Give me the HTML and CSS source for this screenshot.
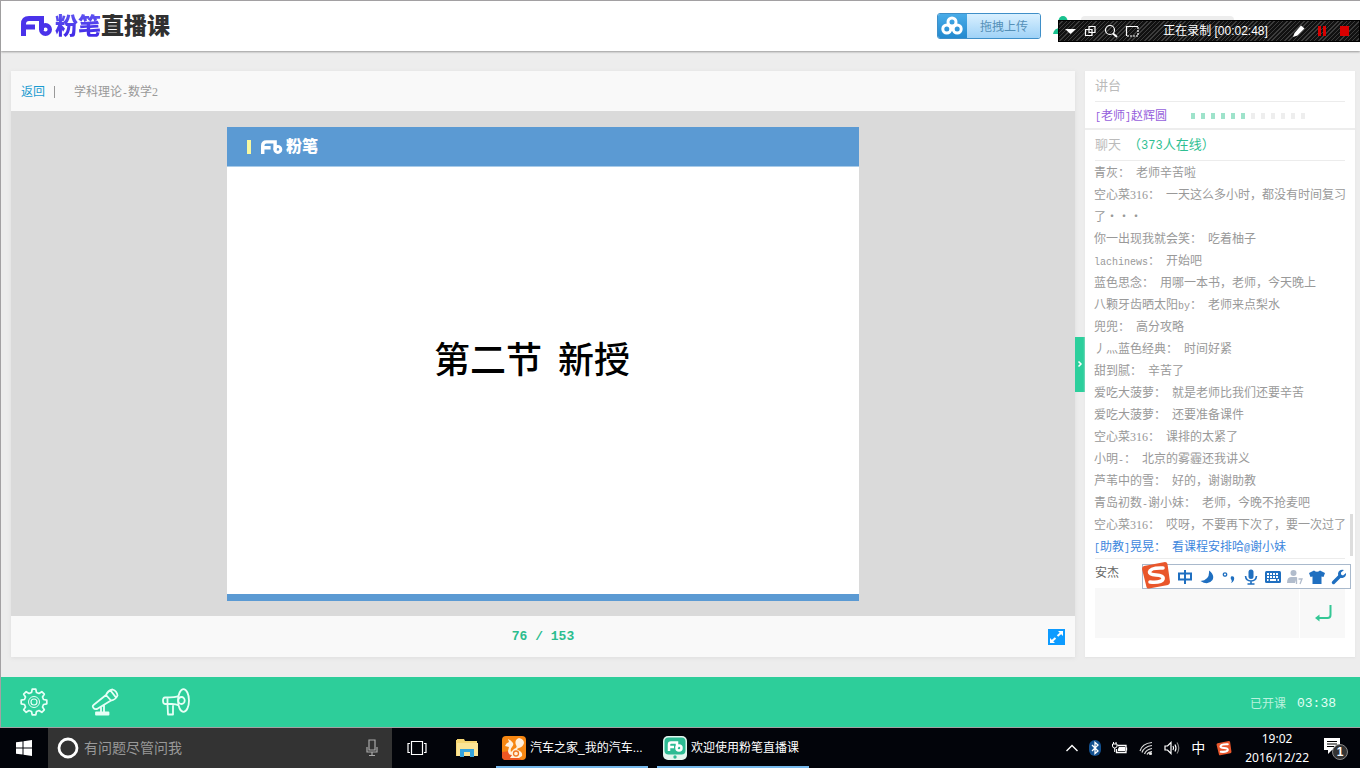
FILE: index.html
```html
<!DOCTYPE html>
<html lang="zh-CN">
<head>
<meta charset="utf-8">
<title>粉笔直播课</title>
<link rel="stylesheet" href="styles.css">
</head>
<body>
<div class="app">
  <header class="header">
    <h1 class="brand">
      <svg class="brand-mark" width="32" height="20" viewBox="0 0 32 20" fill="none" stroke="#4a32ea" stroke-width="5" aria-hidden="true"><path d="M2.500 20V8Q2.500 2.500 8 2.500H20.500V14M3 11H14"/><circle cx="24.500" cy="13.500" r="4.300" stroke-width="4.400"/></svg>
      <span class="brand-name">粉笔</span><span class="brand-product">直播课</span>
    </h1>
    <div class="header-side">
      <button class="upload" type="button">
        <span class="upload-icon"><svg width="22" height="20" viewBox="0 0 22 20" fill="none" stroke="#fff" stroke-width="3" aria-hidden="true"><circle cx="11" cy="6" r="4"/><circle cx="5.800" cy="13" r="4"/><circle cx="16.200" cy="13" r="4"/></svg></span>
        <span class="upload-label">拖拽上传</span>
      </button>
      <svg class="avatar" width="20" height="20" viewBox="0 0 20 20" fill="#19c18e" aria-hidden="true"><ellipse cx="10" cy="5" rx="4.500" ry="5"/><path d="M0 18Q1 12 7 12H13Q19 12 20 18Z"/></svg>
      <div class="user-box"></div>
    </div>
  </header>

  <main class="main">
    <section class="lesson">
      <nav class="crumbs"><a href="#" class="back">返回</a><span class="bar"></span><span>学科理论<span class="half">-</span>数学<span class="num">2</span></span></nav>
      <div class="stage">
        <article class="slide">
          <div class="slide-head">
            <span class="slide-tick"></span>
            <svg width="22" height="14" viewBox="0 0 32 20" fill="none" stroke="#fff" stroke-width="5" aria-hidden="true"><path d="M2.500 20V8Q2.500 2.500 8 2.500H20.500V14M3 11H14"/><circle cx="24.500" cy="13.500" r="4.300" stroke-width="4.400"/></svg>
            <span class="slide-brand">粉笔</span>
          </div>
          <h2 class="slide-title">第二节&nbsp;&nbsp;新授</h2>
          <div class="slide-foot"></div>
        </article>
      </div>
      <footer class="pager">
        <span class="page-number">76 / 153</span>
        <button class="expand" type="button" aria-label="全屏"><svg width="17" height="16" viewBox="0 0 17 16" aria-hidden="true"><path d="M3.500 12.500L7.500 9M9.500 7L13.500 3.500" stroke="#fff" stroke-width="2"/><path d="M15 2V7L10 2ZM2 14V9L7 14Z" fill="#fff"/></svg></button>
      </footer>
    </section>

    <button class="handle" type="button" aria-label="收起"><svg width="6" height="8" viewBox="0 0 6 8" fill="none" stroke="#fff" stroke-width="1.500" aria-hidden="true"><path d="M1.500 1.500L4 4L1.500 6.500"/></svg></button>

    <aside class="side">
      <h3 class="side-head">讲台</h3>
      <div class="teacher">
        <span class="teacher-name"><span class="half">[</span>老师<span class="half">]</span>赵辉圆</span>
        <span class="meter"><i class="on"></i><i class="on"></i><i class="on"></i><i class="on"></i><i class="on"></i><i class="on"></i><i></i><i></i><i></i><i></i><i></i><i></i></span>
      </div>
      <h3 class="side-head">聊天<span class="online">（<span class="count">373</span>人在线）</span></h3>
      <ul class="log">
        <li><b>青灰：</b>老师辛苦啦</li>
        <li><b>空心菜<span class="num">316</span>：</b>一天这么多小时，都没有时间复习了<span class="dots">···</span></li>
        <li><b>你一出现我就会笑：</b>吃着柚子</li>
        <li><b><span class="half">lachinews</span>：</b>开始吧</li>
        <li><b>蓝色思念：</b>用哪一本书，老师，今天晚上</li>
        <li><b>八颗牙齿晒太阳<span class="half">by</span>：</b>老师来点梨水</li>
        <li><b>兜兜：</b>高分攻略</li>
        <li><b>丿灬蓝色经典：</b>时间好紧</li>
        <li><b>甜到腻：</b>辛苦了</li>
        <li><b>爱吃大菠萝：</b>就是老师比我们还要辛苦</li>
        <li><b>爱吃大菠萝：</b>还要准备课件</li>
        <li><b>空心菜<span class="num">316</span>：</b>课排的太紧了</li>
        <li><b>小明<span class="half">-</span>：</b>北京的雾霾还我讲义</li>
        <li><b>芦苇中的雪：</b>好的，谢谢助教</li>
        <li><b>青岛初数<span class="half">-</span>谢小妹：</b>老师，今晚不抢麦吧</li>
        <li><b>空心菜<span class="num">316</span>：</b>哎呀，不要再下次了，要一次过了</li>
        <li class="staff"><b><span class="half">[</span>助教<span class="half">]</span>晃晃：</b>看课程安排哈<span class="half">@</span>谢小妹</li>
      </ul>
      <form class="compose">
        <label class="me" for="message">安杰</label>
        <div class="compose-row">
          <input id="message" class="message" type="text">
          <button class="send" type="button" aria-label="发送"><svg width="18" height="18" viewBox="0 0 18 18" fill="none" stroke="#35c795" stroke-width="2" aria-hidden="true"><path d="M16.500 1V11Q16.500 14 13.500 14H3"/><path d="M5.500 10.500L1 14L5.500 17.500Z" fill="#35c795" stroke="none"/></svg></button>
        </div>
        <div class="ime">
          <svg class="ime-logo" width="30" height="28" viewBox="0 0 30 28" aria-hidden="true"><path d="M3 5L24 1Q26 1 26.500 3L29 21Q29 23 27 24L8 27.500Q6 28 5.500 26L1 8Q1 5.500 3 5Z" fill="#e9562b"/><path d="M22 7Q9 6.500 8.500 11Q8.500 13.500 15 14Q23 14.500 22 18Q20.500 22 9 21" fill="none" stroke="#fff" stroke-width="3.600" stroke-linecap="round"/></svg>
          <button type="button" aria-label="中文"><svg viewBox="0 0 16 16" fill="none" stroke="#1f6fc0" stroke-width="2"><path d="M2 4.500H14V10.500H2ZM8 1V15"/></svg></button>
          <button type="button" aria-label="半角"><svg viewBox="0 0 16 16" fill="#1f6fc0"><path d="M10 1.500Q16 6 13.500 11Q9 17 1.500 12Q11 11 10 1.500Z"/></svg></button>
          <button type="button" aria-label="标点"><svg viewBox="0 0 16 16" fill="#1f6fc0"><circle cx="4" cy="5.500" r="1.700" fill="none" stroke="#1f6fc0" stroke-width="1.300"/><path d="M10 7.500Q14 6.500 13 11Q12 13.500 10 14Q11.500 12 10.500 11Q9 9 10 7.500Z"/></svg></button>
          <button type="button" aria-label="语音"><svg viewBox="0 0 16 16"><rect x="5.500" y="0.500" width="5" height="9.500" rx="2.500" fill="#1f6fc0"/><path d="M2.500 7Q3 12 8 12Q13 12 13.500 7M8 12V15M4.500 15H11.500" fill="none" stroke="#1f6fc0" stroke-width="1.600"/></svg></button>
          <button type="button" aria-label="键盘"><svg viewBox="0 0 16 16"><rect y="2" width="16" height="12" rx="1.500" fill="#1f6fc0"/><path d="M2 5H14M2 8H14" stroke="#fff" stroke-width="1.800" stroke-dasharray="2 1"/><path d="M2 11H3.500M5 11H11M12.500 11H14" stroke="#fff" stroke-width="1.800"/></svg></button>
          <button type="button" aria-label="用户"><svg viewBox="0 0 16 16"><circle cx="6.500" cy="4" r="3" fill="#b1bccc"/><path d="M0 14Q0 8 4 8H10L8 14Z" fill="#b1bccc"/><path d="M8 10L9.500 9.500V15M11.500 10H15L13 15" fill="none" stroke="#b1bccc" stroke-width="1.300"/></svg></button>
          <button type="button" aria-label="皮肤"><svg viewBox="0 0 16 16" fill="#1f6fc0"><path d="M5 1.500Q8 4 11 1.500L16 4L14.500 8L12.500 7.500V15H3.500V7.500L1.500 8L0 4Z"/></svg></button>
          <button type="button" aria-label="工具"><svg viewBox="0 0 16 16"><path d="M2.500 13.500L9 7" stroke="#1f6fc0" stroke-width="3.400" stroke-linecap="round"/><path d="M13 1Q8 0 7 4.500Q7 9.500 11.500 9Q15.500 8 15 4L12 6.500L10 5.500L10 3.500Z" fill="#1f6fc0"/></svg></button>
        </div>
      </form>
    </aside>
  </main>

  <div class="tools">
    <button type="button" aria-label="设置"><svg width="28" height="28" viewBox="0 0 28 28" fill="none" stroke="#e6fff6" stroke-width="1.700" stroke-linejoin="round" aria-hidden="true"><path d="M11.500 4.500L12.200 1.200H15.800L16.500 4.500L19 5.500L21.800 3.700L24.300 6.200L22.500 9L23.500 11.500L26.800 12.200V15.800L23.500 16.500L22.500 19L24.300 21.800L21.800 24.300L19 22.500L16.500 23.500L15.800 26.800H12.200L11.500 23.500L9 22.500L6.200 24.300L3.700 21.800L5.500 19L4.500 16.500L1.200 15.800V12.200L4.500 11.500L5.500 9L3.700 6.200L6.200 3.700L9 5.500Z"/><circle cx="14" cy="14" r="5.500" stroke-width="1"/><circle cx="14" cy="14" r="3" stroke-width="1.200"/></svg></button>
    <button type="button" aria-label="麦克风"><svg width="28" height="28" viewBox="0 0 28 28" fill="none" stroke="#e6fff6" stroke-width="1.800" stroke-linejoin="round" stroke-linecap="round" aria-hidden="true"><path d="M2.500 17L15 7L20 12.500L6 21Q3.500 21.500 2.500 20Q1 18 2.500 17ZM15 7Q17 2.500 21.500 1.500Q26 3 26.500 7.500Q24.500 12 20 12.500M19.500 2.500L25 9.500M10 19V24M13 17V24M5 24.500H17.500V26.500H5Z"/></svg></button>
    <button type="button" aria-label="喇叭"><svg width="28" height="28" viewBox="0 0 28 28" fill="none" stroke="#e6fff6" stroke-width="1.800" stroke-linejoin="round" aria-hidden="true"><ellipse cx="21.500" cy="12.500" rx="5.500" ry="11.300"/><ellipse cx="19.500" cy="12.500" rx="3.200" ry="3.500"/><path d="M17 8Q14 9.500 3 9.500Q1 9.500 1 12.500Q1 16 3 16H10Q14 16 17 17.500M5.500 9.500V16M5.500 16L6 26.500H11V16"/></svg></button>
    <p class="status">已开课<time>03:38</time></p>
  </div>
</div>

<div class="recorder">
  <svg class="rec-tools" width="76" height="16" viewBox="0 0 76 16" fill="none" stroke="#fff" stroke-width="1.200" aria-hidden="true"><path d="M1 6H12L6.500 11Z" fill="#fff" stroke="none"/><path d="M25 3.500H31V9.500H25ZM21.500 6.500H28V12.500H21.500Z"/><circle cx="46" cy="7" r="4.500"/><path d="M49 10.500L53 14" stroke-width="2"/><path d="M62.500 13V3.500H74" /><path d="M74 4V13H62" stroke-dasharray="2 1"/></svg>
  <span class="rec-label">正在录制 [00:02:48]</span>
  <svg class="rec-actions" width="60" height="16" viewBox="0 0 60 16" aria-hidden="true"><path d="M2 14L3.500 10L10 2.500L13.500 5.500L6.500 12.500Z" fill="#fff"/><path d="M27 3H30V13H27ZM32 3H35V13H32Z" fill="#d80000"/><rect x="49" y="3" width="9" height="10" fill="#d80000"/></svg>
</div>

<footer class="taskbar">
  <button class="start" type="button" aria-label="开始"><svg width="16" height="16" viewBox="0 0 16 16" fill="#fff" aria-hidden="true"><path d="M0 2.300L6.500 1.400V7.500H0ZM7.500 1.200L16 0V7.500H7.500ZM0 8.500H6.500V14.600L0 13.700ZM7.500 8.500H16V16L7.500 14.800Z"/></svg></button>
  <div class="search">
    <svg width="22" height="22" viewBox="0 0 22 22" fill="none" aria-hidden="true"><circle cx="11" cy="11" r="9" stroke="#fff" stroke-width="2.800"/></svg>
    <input type="text" placeholder="有问题尽管问我" aria-label="搜索">
    <svg width="12" height="18" viewBox="0 0 12 18" fill="none" stroke="#aaa" stroke-width="1.200" aria-hidden="true"><path d="M3 1H9V11H3ZM1 8V13H11V8M6 13V16M3 16.500H9"/></svg>
  </div>
  <button class="pin" type="button" aria-label="任务视图"><svg width="20" height="16" viewBox="0 0 20 16" fill="none" stroke="#fff" stroke-width="1.200" aria-hidden="true"><path d="M4.500 1.500H15.500V14.500H4.500ZM3 3.500H1V12.500H3M17 3.500H19V12.500H17"/></svg></button>
  <button class="pin" type="button" aria-label="文件资源管理器"><svg width="22" height="20" viewBox="0 0 22 20" aria-hidden="true"><path d="M0 2H1V1H8L9 3H21V18H0Z" fill="#f6d673"/><path d="M1 5H22V18H1Z" fill="#fce596"/><path d="M4 19V11H18V19H14V14H8V19Z" fill="#35a4dd"/></svg></button>
  <button class="task" type="button"><svg width="24" height="24" viewBox="0 0 24 24" aria-hidden="true"><rect width="24" height="24" rx="4" fill="#f68712"/><path d="M0 16V20Q0 24 4 24H20Q12 20 8 15Z" fill="#ee5722"/><path d="M3 10Q4 7 7 6L6 3Q9 4 11 7Q12 9 10 11Q8 13 9 16L12 13Q16 12 14 9Q12 4 17 2Q22 3 22 7Q21 11 17 12Q14 13 16 14Q21 16 20 20L17 22H8L10 19Q6 19 6 15L7 11Z" fill="#fff0dc"/><circle cx="14" cy="17.500" r="2.500" fill="none" stroke="#f07722" stroke-width="1.300"/></svg><span>汽车之家_我的汽车...</span></button>
  <button class="task" type="button"><svg width="24" height="24" viewBox="0 0 24 24" aria-hidden="true"><rect width="24" height="24" rx="5" fill="#e3f5ee"/><rect x="1.500" y="1.500" width="21" height="17" rx="4" fill="#2dbb93"/><g fill="none" stroke="#fff" stroke-width="2.500"><path d="M6 15V8.500Q6 6.500 8 6.500H14V12M6.500 11H11"/><circle cx="16" cy="12" r="2.500"/></g><circle cx="12" cy="21" r="1.700" fill="#2dbb93"/></svg><span>欢迎使用粉笔直播课</span></button>
  <div class="tray">
    <svg width="12" height="8" viewBox="0 0 12 8" fill="none" stroke="#fff" stroke-width="1.400" aria-hidden="true"><path d="M0.500 7L6 1.500L11.500 7"/></svg>
    <svg width="12" height="16" viewBox="0 0 12 16" aria-hidden="true"><rect width="12" height="16" rx="6" fill="#12508f"/><path d="M3 5L9 11L6 13.500V2.500L9 5L3 11" fill="none" stroke="#fff" stroke-width="1.300"/></svg>
    <svg width="16" height="14" viewBox="0 0 16 14" aria-hidden="true"><path d="M5.500 4.500H14V11.500H4.500V8M14.500 6.500V9.500" fill="none" stroke="#fff" stroke-width="1.300"/><path d="M7 6H13V10H6V8Z" fill="#fff"/><path d="M0.500 3H5V5Q5 7 2.700 7Q0.500 7 0.500 5ZM1.500 1V3M4 1V3M2.700 7V11" fill="none" stroke="#fff"/></svg>
    <svg width="14" height="14" viewBox="0 0 14 14" fill="none" stroke="#ddd" stroke-width="1.200" aria-hidden="true"><path d="M1 10Q3 2.500 13 1.500M3 11.500Q5 5.500 13 4.500M5.500 13Q7 8.500 13 7.500M8 13.500Q9 11 13 10.500"/><circle cx="11.500" cy="12.500" r="1" fill="#fff"/></svg>
    <svg width="16" height="14" viewBox="0 0 16 14" fill="none" stroke="#fff" stroke-width="1.200" aria-hidden="true"><path d="M1 5H3.500L7 1.500V12.500L3.500 9H1Z"/><path d="M9 5Q10.200 7 9 9M11 3.500Q13 7 11 10.500"/><path d="M13 1.500Q16.500 7 13 12.500" stroke="#888"/></svg>
    <span class="lang">中</span>
    <svg width="16" height="16" viewBox="0 0 30 28" aria-hidden="true"><path d="M3 5L24 1Q26 1 26.500 3L29 21Q29 23 27 24L8 27.500Q6 28 5.500 26L1 8Q1 5.500 3 5Z" fill="#e9562b"/><path d="M22 7Q9 6.500 8.500 11Q8.500 13.500 15 14Q23 14.500 22 18Q20.500 22 9 21" fill="none" stroke="#fff" stroke-width="4" stroke-linecap="round"/></svg>
    <p class="clock">19:02<br>2016/12/22</p>
    <div class="notice"><svg width="16" height="16" viewBox="0 0 16 16" aria-hidden="true"><path d="M0 0H16V12H8L4 16V12H0Z" fill="#fff"/><path d="M3 3.500H13M3 6H13M3 8.500H10" stroke="#000"/></svg><span class="badge">1</span></div>
  </div>
</footer>
</body>
</html>
```
FILE: styles.css
```css
* { box-sizing: border-box; }
body {
  margin: 0;
  min-height: 100vh;
  display: flex;
  flex-direction: column;
  position: relative;
  font: 12px/22px "Liberation Sans", "Noto Sans CJK SC", sans-serif;
  background: #ededed;
}
h1, h2, h3, p, ul { margin: 0; padding: 0; font-weight: normal; }
button { border: 0; padding: 0; background: none; font: inherit; color: inherit; cursor: pointer; }
input { border: 0; padding: 0; font: inherit; min-width: 0; }
svg { display: block; flex: none; }
.half { font: 10px/10px "Liberation Mono", monospace; }
.num { font: 12px/12px "Liberation Serif", serif; }

.app {
  flex: 1;
  display: flex;
  flex-direction: column;
  border: solid #a3a1a3;
  border-width: 1px 0 1px 1px;
}
.header {
  height: 50px;
  padding: 0 20px;
  display: flex;
  align-items: center;
  justify-content: space-between;
  background: #fff;
  box-shadow: 0 1px 2px #999;
}
.brand { display: flex; align-items: center; font-size: 23px; font-weight: 900; line-height: 30px; }
.brand-mark { margin-right: 2px; }
.brand-name { color: #4a3cf0; background: linear-gradient(#6258f2, #3a20e4); background-clip: text; -webkit-text-fill-color: transparent; }
.brand-product { color: #303030; }
.header-side { display: flex; align-items: center; padding-right: 106px; }
.upload {
  display: flex;
  height: 26px;
  border: 1px solid #3f8fc8;
  border-radius: 3px;
  overflow: hidden;
  color: #5590b8;
}
.upload-icon { width: 29px; display: grid; place-items: center; background: linear-gradient(#49ace8, #2389cf); }
.upload-label { padding: 2px 12px 0 13px; background: linear-gradient(#d9f0ff, #9fd2f7); }
.avatar { margin-left: 12px; }
.user-box { width: 153px; height: 20px; margin-left: 8px; border-radius: 4px; background: #ededed; }

.main { flex: 1; display: flex; padding: 20px 5px 20px 10px; }
.lesson { flex: 1; display: flex; flex-direction: column; background: #f9f9f9; box-shadow: 0 1px 4px #ddd; }
.crumbs { height: 40px; padding: 1px 10px 0; display: flex; align-items: center; color: #999; }
.back { color: #1b9bd0; text-decoration: none; }
.bar { width: 1px; height: 12px; margin: 0 19px 0 9px; background: #999; }
.stage { flex: 1; min-height: 0; display: flex; justify-content: center; padding: 16px 0 15px; background: #dadada; }
.slide { height: 100%; aspect-ratio: 4 / 3; display: flex; flex-direction: column; background: #fff; }
.slide-head { height: 40px; padding-left: 20px; display: flex; align-items: center; background: #5b9ad3; border-bottom: 1px solid #a9cbe8; }
.slide-tick { width: 4px; height: 14px; margin-right: 10px; background: #f6f7a0; }
.slide-brand { margin-left: 3px; color: #fff; font-size: 16px; font-weight: 900; }
.slide-title {
  flex: 1;
  display: grid;
  place-items: center;
  padding: 0 22px 48px 0;
  font: 500 36px/44px "Noto Sans CJK SC", sans-serif;
  color: #000;
}
.slide-foot { height: 7px; background: #5b9ad3; }
.pager { height: 41px; padding: 0 10px; display: grid; grid-template-columns: 1fr auto 1fr; align-items: center; }
.page-number { grid-column: 2; color: #2bbd8e; font: bold 13px/20px "Liberation Mono", monospace; }
.expand { justify-self: end; width: 17px; height: 16px; background: #0d9bff; }

.handle { align-self: center; width: 10px; height: 55px; display: grid; place-items: center; background: #2ccf9c; }

.side { width: 270px; display: flex; flex-direction: column; background: #fff; box-shadow: 0 1px 2px #e2e2e2; }
.side-head { margin: 0 10px; height: 31px; border-bottom: 1px solid #ececec; color: #bbb; font-size: 13px; line-height: 30px; }
.online { margin-left: 7px; color: #2fbf92; }
.count { font: 12px/12px "Liberation Mono", monospace; }
.teacher { height: 28px; padding: 2px 10px 0; display: flex; align-items: center; gap: 24px; border-bottom: 2px solid #ededed; color: #9560dc; }
.meter { display: flex; gap: 6px; }
.meter i { width: 4px; height: 6px; background: #eee; }
.meter .on { background: #9fe3cb; }
.log { position: relative; flex: 1; padding: 1px 8px 0 9px; list-style: none; color: #999; }
.log::after { content: ""; position: absolute; right: 2px; bottom: 2px; width: 3px; height: 42px; background: #ddd; }
.log li { min-height: 22px; }
.log b { margin-right: 6px; font-weight: normal; }
.dots { font: 12px/12px "Noto Sans CJK SC", sans-serif; }
.log .staff { color: #3c86dd; }
.compose { position: relative; margin: 0 10px; padding-bottom: 19px; border-top: 1px solid #ececec; }
.me { display: block; height: 29px; line-height: 28px; font-size: 12px; color: #666; }
.compose-row { display: flex; height: 50px; gap: 1px; }
.message { flex: 1; background: #f8f8f8; }
.send { width: 45px; display: grid; place-items: center; background: #f8f8f8; }
.ime {
  position: absolute;
  top: 5px;
  right: -6px;
  display: flex;
  align-items: center;
  gap: 6px;
  height: 25px;
  padding: 0 3px 0 0;
  border: 1px solid #a9b9cc;
  background: #fff;
}
.ime-logo { margin: -3px 0 0 -2px; }
.ime button { width: 16px; height: 16px; }

.tools { height: 50px; padding: 0 24px 0 19px; display: flex; align-items: center; gap: 43px; background: #2dce9a; }
.status { margin-left: auto; padding-top: 4px; display: flex; align-items: center; gap: 11px; color: #b9f2de; }
.status time { font: 13px/20px "Liberation Mono", monospace; color: #e2fff5; }

.recorder {
  position: absolute;
  top: 20px;
  right: 0;
  width: 302px;
  height: 22px;
  padding: 0 8px 0 5px;
  display: flex;
  align-items: center;
  justify-content: space-between;
  color: #fff;
  border: 1px solid #000;
  background: repeating-linear-gradient(135deg, #111 0 2px, #3c3c3c 2px 3px);
}

.taskbar { height: 40px; display: flex; align-items: stretch; background: #02040a; color: #fff; }
.start { width: 48px; display: grid; place-items: center; }
.search { width: 344px; padding: 0 14px 0 9px; display: flex; align-items: center; gap: 5px; background: #333; }
.search input { flex: 1; background: none; font-size: 14px; color: #fff; }
.search input::placeholder { color: #999; }
.pin { width: 50px; display: grid; place-items: center; }
.task { width: 152px; padding: 2px 6px 0; margin-right: 9px; display: flex; align-items: center; gap: 4px; border-bottom: 2px solid #76b9ed; white-space: nowrap; }
.pin + .task { margin-left: 4px; }
.tray { margin-left: auto; padding-right: 10px; display: flex; align-items: center; gap: 11px; }
.lang { font-size: 14px; }
.clock { text-align: center; font: 12px/19px "Noto Sans", sans-serif; margin-left: 2px; }
.notice { position: relative; width: 26px; height: 20px; margin-left: 4px; }
.badge {
  position: absolute;
  left: 8px;
  top: 6px;
  width: 16px;
  height: 16px;
  border: 1px solid #888;
  border-radius: 50%;
  background: #333;
  font-weight: bold;
  line-height: 14px;
  text-align: center;
}
```
